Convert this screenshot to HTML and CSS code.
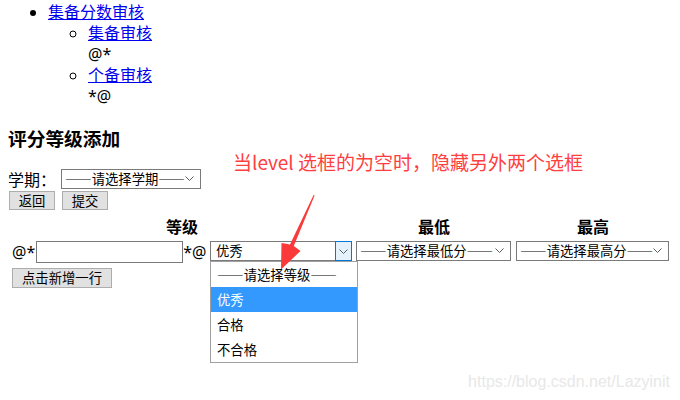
FILE: index.html
```html
<!DOCTYPE html>
<html lang="zh-CN">
<head>
    <meta charset="UTF-8">
    <meta name="viewport" content="width=device-width, initial-scale=1.0">
    <title>评分等级添加</title>
    <link rel="stylesheet" href="styles.css">
</head>
<body>
    <ul class="nav">
        <li><a href="#">集备分数审核</a>
            <ul>
                <li><a href="#">集备审核</a><br>@*</li>
                <li><a href="#">个备审核</a><br>*@</li>
            </ul>
        </li>
    </ul>

    <h3 class="title">评分等级添加</h3>

    <div class="term">
        <label>学期：</label>
        <div class="select term-select">
            <span>——请选择学期——</span>
            <svg class="chev" width="9" height="5" viewBox="0 0 9 5"><polyline points="0.5,0.5 4.5,4.5 8.5,0.5" /></svg>
        </div>
    </div>

    <div class="actions">
        <button class="btn">返回</button>
        <button class="btn">提交</button>
    </div>

    <div class="grade-table">
        <div class="grade-head">
            <div class="th th-level">等级</div>
            <div></div>
            <div class="th">最低</div>
            <div class="th">最高</div>
        </div>
        <div class="grade-row">
            <div class="cell-name">@*<input type="text" class="name-input">*@</div>
            <div class="cell level-cell">
                <div class="select level-select">
                    <span>优秀</span>
                    <div class="arrow-box">
                        <svg class="chev" width="9" height="5" viewBox="0 0 9 5"><polyline points="0.5,0.5 4.5,4.5 8.5,0.5" /></svg>
                    </div>
                </div>
                <ul class="dropdown">
                    <li>——请选择等级——</li>
                    <li class="selected">优秀</li>
                    <li>合格</li>
                    <li>不合格</li>
                </ul>
            </div>
            <div class="cell">
                <div class="select min-select">
                    <span>——请选择最低分——</span>
                    <svg class="chev" width="9" height="5" viewBox="0 0 9 5"><polyline points="0.5,0.5 4.5,4.5 8.5,0.5" /></svg>
                </div>
            </div>
            <div class="cell">
                <div class="select max-select">
                    <span>——请选择最高分——</span>
                    <svg class="chev" width="9" height="5" viewBox="0 0 9 5"><polyline points="0.5,0.5 4.5,4.5 8.5,0.5" /></svg>
                </div>
            </div>
        </div>
    </div>

    <button class="btn add-row">点击新增一行</button>

    <!-- annotation drawn over the screenshot -->
    <p class="note">当level 选框的为空时，隐藏另外两个选框</p>
    <svg class="pointer" width="680" height="400" viewBox="0 0 680 400">
        <polygon points="313.6,195 314.6,195.6 293.8,246 300.5,251 281,269.5 281.5,243 290,244.6" />
    </svg>

    <div class="watermark">https://blog.csdn.net/Lazyinit</div>
</body>
</html>
```

FILE: styles.css
```css
body {
    margin: 0 8px;
    min-height: 392px;
    font-family: "Noto Sans", "Noto Sans CJK SC", sans-serif;
    font-size: 16px;
    color: #000;
    background: #fff;
}
a {
    color: #0000ee;
}
.nav {
    margin: 2px 0 0;
    padding-left: 40px;
    line-height: 21px;
}
.nav ul {
    margin: 0;
    padding-left: 40px;
    list-style-type: circle;
}
.title {
    margin: 21px 0 0;
    font-size: 18.72px;
    line-height: 22px;
    font-weight: bold;
}
.term {
    display: flex;
    align-items: center;
    margin-top: 19px;
    height: 20px;
}
.term label {
    width: 53px;
    line-height: 20px;
    font-family: "Noto Sans CJK SC", sans-serif;
}
.select {
    position: relative;
    box-sizing: border-box;
    height: 20px;
    border: 1px solid #7a7a7a;
    background: #fff;
    font-family: "Noto Sans CJK SC", sans-serif;
    font-size: 13.33px;
    line-height: 18px;
    padding-left: 3px;
    white-space: nowrap;
}
.select .chev {
    position: absolute;
    right: 6px;
    top: 6px;
}
.chev polyline {
    fill: none;
    stroke: #5c5c5c;
    stroke-width: 1;
}
.term-select {
    width: 140px;
}
.actions {
    display: flex;
    gap: 7px;
    margin-top: 2px;
    padding-left: 1px;
}
.btn {
    box-sizing: border-box;
    height: 19px;
    width: 46px;
    padding: 0;
    border: 1px solid #adadad;
    background: #e1e1e1;
    font-family: "Noto Sans CJK SC", sans-serif;
    font-size: 13.33px;
    line-height: 17px;
    color: #000;
}
.grade-head,
.grade-row {
    display: grid;
    grid-template-columns: 200px 146px 160px 158px;
}
.grade-head {
    margin-top: 6px;
    height: 22px;
    line-height: 22px;
}
.th {
    font-weight: bold;
    text-align: center;
}
.th-level {
    text-align: right;
    padding-right: 10px;
}
.grade-row {
    margin-top: 3px;
    height: 22px;
}
.cell-name {
    display: flex;
    align-items: center;
    padding-left: 4px;
    line-height: 22px;
}
.name-input {
    box-sizing: border-box;
    width: 147px;
    height: 22px;
    margin: 0 0 0 1px;
    border: 1px solid #7a7a7a;
    padding: 0;
}
.cell {
    padding-left: 2px;
}
.level-cell {
    position: relative;
}
.level-select {
    width: 142px;
    padding-left: 5px;
}
.arrow-box {
    position: absolute;
    top: -1px;
    right: -1px;
    bottom: -1px;
    width: 17px;
    box-sizing: border-box;
    border: 1px solid #0078d7;
    background: #e5f1fb;
}
.arrow-box .chev {
    right: 3px;
    top: 7px;
}
.dropdown {
    position: absolute;
    top: 20px;
    left: 2px;
    z-index: 2;
    width: 148px;
    margin: 0;
    padding: 0;
    list-style: none;
    box-sizing: border-box;
    border: 1px solid #a0a0a0;
    background: #fff;
    font-family: "Noto Sans CJK SC", sans-serif;
    font-size: 13.33px;
}
.dropdown li {
    height: 25px;
    line-height: 25px;
    padding-left: 6px;
}
.dropdown li.selected {
    background: #3399ff;
    color: #fff;
}
.min-select {
    width: 155px;
}
.max-select {
    width: 153px;
}
.add-row {
    display: block;
    margin: 5px 0 0 4px;
    width: 100px;
    height: 20px;
    line-height: 18px;
}
.note {
    position: absolute;
    left: 233px;
    top: 149px;
    margin: 0;
    font-family: "Noto Sans CJK SC", sans-serif;
    font-size: 19px;
    line-height: 26px;
    color: #ff3f3f;
}
.pointer {
    position: absolute;
    left: 0;
    top: 0;
    z-index: 3;
    pointer-events: none;
}
.pointer polygon {
    fill: #fa3a3a;
}
.watermark {
    position: absolute;
    right: 10px;
    top: 372px;
    font-family: "Liberation Sans", Arial, sans-serif;
    font-size: 16px;
    line-height: 20px;
    color: #e8e8e8;
}
```
